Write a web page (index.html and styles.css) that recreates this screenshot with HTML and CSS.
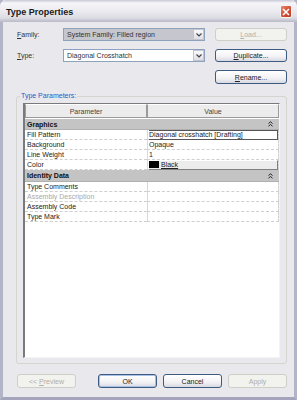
FILE: index.html
```html
<!DOCTYPE html>
<html>
<head>
<meta charset="utf-8">
<link rel="stylesheet" href="styles.css">
</head>
<body>
<div class="window">
  <div class="titlebar">
    <span class="title">Type Properties</span>
    <span class="close"><svg width="8" height="8" viewBox="0 0 8 8"><path d="M1 1 L7 7 M7 1 L1 7" stroke="#fff" stroke-width="1.6"/></svg></span>
  </div>
  <div class="body">
    <div class="props">
      <span class="lbl r1"><span><u>F</u>amily:</span></span>
      <div class="combo combo-dis r1"><span class="ctext">System Family: Filled region</span><span class="drop"><svg width="6" height="4" viewBox="0 0 6 4"><path d="M0.5 0.5 L3 3 L5.5 0.5" fill="none" stroke="#444" stroke-width="1.2"/></svg></span></div>
      <span class="btn btn-dis pbtn r1"><span><u>L</u>oad...</span></span>
      <span class="lbl r2"><span><u>T</u>ype:</span></span>
      <div class="combo r2"><span class="ctext">Diagonal Crosshatch</span><span class="drop"><svg width="6" height="4" viewBox="0 0 6 4"><path d="M0.5 0.5 L3 3 L5.5 0.5" fill="none" stroke="#444" stroke-width="1.2"/></svg></span></div>
      <span class="btn pbtn r2"><span><u>D</u>uplicate...</span></span>
      <span class="btn pbtn r3"><span><u>R</u>ename...</span></span>
    </div>
    <div class="group">
      <span class="legend">Type Parameters:</span>
      <div class="table">
        <div class="hcell">Parameter</div>
        <div class="hcell">Value</div>
        <div class="grow"><span>Graphics</span><svg class="chev" width="5" height="6" viewBox="0 0 5 6"><path d="M0.5 2.5 L2.5 0.8 L4.5 2.5 M0.5 5.2 L2.5 3.5 L4.5 5.2" fill="none" stroke="#222" stroke-width="1"/></svg></div>
        <div class="cell">Fill Pattern</div><div class="cell val"><span class="edit">Diagonal crosshatch [Drafting]</span></div>
        <div class="cell">Background</div><div class="cell val">Opaque</div>
        <div class="cell">Line Weight</div><div class="cell val">1</div>
        <div class="cell">Color</div><div class="cell val"><span class="colbtn"><span class="swatch"></span><u>Black</u></span></div>
        <div class="grow"><span>Identity Data</span><svg class="chev" width="5" height="6" viewBox="0 0 5 6"><path d="M0.5 2.5 L2.5 0.8 L4.5 2.5 M0.5 5.2 L2.5 3.5 L4.5 5.2" fill="none" stroke="#222" stroke-width="1"/></svg></div>
        <div class="cell">Type Comments</div><div class="cell val"></div>
        <div class="cell dim">Assembly Description</div><div class="cell val"></div>
        <div class="cell">Assembly Code</div><div class="cell val"></div>
        <div class="cell">Type Mark</div><div class="cell val"></div>
      </div>
    </div>
    <div class="footer">
      <span class="btn fbtn btn-dis"><span>&lt;&lt; <u>P</u>review</span></span>
      <span class="spacer"></span>
      <span class="btn fbtn btn-def">OK</span>
      <span class="btn fbtn">Cancel</span>
      <span class="btn fbtn btn-dis">Apply</span>
    </div>
  </div>
</div>
</body>
</html>
```

FILE: styles.css
```css
html, body {
  margin: 0;
  padding: 0;
  width: 297px;
  height: 400px;
  overflow: hidden;
  background: #ffffff;
}
.window {
  box-sizing: border-box;
  width: 297px;
  height: 400px;
  background: #e9e9ed;
  border-left: 3px solid #b4b4c8;
  border-right: 3px solid #b4b4c8;
  border-bottom: 3px solid #a4a4bc;
  font-family: "Liberation Sans", Arial, sans-serif;
  font-size: 7px;
  color: #222;
  display: flex;
  flex-direction: column;
}
.titlebar {
  height: 22px;
  margin: 0 -3px;
  box-sizing: border-box;
  background: linear-gradient(#c8c8d6 0px, #f6f6f9 3px, #ececf1 10px, #dcdce4 18px, #b8b8c8 22px);
  border-radius: 6px 6px 0 0;
  display: flex;
  align-items: center;
  justify-content: space-between;
  padding: 0 5px 0 6px;
}
.title {
  font-weight: bold;
  font-size: 9px;
  color: #1a1a1a;
  margin-top: 1px;
}
.close {
  width: 12px;
  height: 13px;
  box-sizing: border-box;
  border: 1px solid #f4f4f4;
  border-radius: 2px;
  background: linear-gradient(135deg, #e88a6a, #d4523a 50%, #c0381f);
  display: flex;
  align-items: center;
  justify-content: center;
  margin-top: 1px;
}
.body {
  flex: 1;
  display: flex;
  flex-direction: column;
  padding: 6px 0 0 0;
}
.props {
  display: grid;
  grid-template-columns: 46px 142px 10px 72px;
  grid-template-rows: 13px 13px 14px;
  row-gap: 8px;
  padding-left: 14px;
}
.r1 { grid-row: 1; }
.r2 { grid-row: 2; }
.r3 { grid-row: 3; }
.lbl {
  grid-column: 1;
  display: flex;
  align-items: center;
  color: #333;
}
.combo {
  grid-column: 2;
  box-sizing: border-box;
  border: 1px solid #8da2bd;
  background: #fff;
  display: flex;
  align-items: center;
  justify-content: space-between;
}
.pbtn {
  grid-column: 4;
}
.combo-dis {
  background: #c6c6ce;
}
.ctext {
  padding-left: 3px;
  color: #333;
}
.drop {
  width: 11px;
  height: 11px;
  box-sizing: border-box;
  background: linear-gradient(#fbfbfd, #dedee6);
  border: 1px solid #c4c4d0;
  display: flex;
  align-items: center;
  justify-content: center;
}
.btn {
  box-sizing: border-box;
  border: 1px solid #3d5a80;
  border-radius: 3px;
  background: linear-gradient(#ffffff, #f2f2f5 60%, #d8d8e2);
  display: flex;
  align-items: center;
  justify-content: center;
  color: #222;
}
.btn-dis {
  border-color: #cfcfc8;
  background: #f2f2ee;
  color: #b0b0a8;
}
.btn-def {
  box-shadow: inset 0 0 0 1px #a8c0e8;
}
.group {
  position: relative;
  margin: 12px 0 0 13px;
  width: 271px;
  height: 268px;
  box-sizing: border-box;
  border: 1px solid #d4d4d0;
  border-radius: 3px;
  padding: 6px 6px 5px 6px;
}
.legend {
  position: absolute;
  left: 3px;
  top: -5px;
  background: #e9e9ed;
  color: #2a5ac8;
  padding: 0 1px;
  line-height: 8px;
}
.table {
  box-sizing: border-box;
  height: 100%;
  background: #fff;
  border-left: 2px solid #7a7a7a;
  border-top: 1px solid #7a7a7a;
  border-right: 1px solid #f4f4f4;
  border-bottom: 1px solid #f4f4f4;
  display: grid;
  grid-template-columns: 122px 1fr;
  grid-template-rows: 15px 11px repeat(4, 10px) 12px repeat(4, 10px);
  align-content: start;
}
.hcell {
  height: 14px;
  box-sizing: border-box;
  background: #ececec;
  border: 1px solid #9a9a9a;
  border-top-color: #fff;
  display: flex;
  align-items: center;
  justify-content: center;
  color: #444;
}
.grow {
  grid-column: 1 / 3;
  background: #c4c4c4;
  font-weight: bold;
  color: #111;
  display: flex;
  align-items: center;
  justify-content: space-between;
  padding: 0 6px 0 2px;
  border-bottom: 1px solid #b0b0b0;
  box-sizing: border-box;
}
.chev {
  display: block;
}
.cell {
  box-sizing: border-box;
  border-bottom: 1px dashed #cfcfcf;
  padding-left: 2px;
  display: flex;
  align-items: center;
  color: #222;
  white-space: nowrap;
}
.val {
  border-left: 1px solid #d8d8d8;
  padding-left: 1px;
  border-right: 1px dashed #cfcfcf;
}
.dim {
  color: #a8a8a8;
}
.edit {
  box-sizing: border-box;
  width: 100%;
  height: 10px;
  border: 1px solid #555;
  border-left: none;
  display: flex;
  align-items: center;
  background: #fff;
}
.colbtn {
  box-sizing: border-box;
  width: 100%;
  height: 10px;
  background: #ececec;
  border: 1px solid #808080;
  border-top-color: #fff;
  border-left: none;
  display: flex;
  align-items: center;
  gap: 2px;
}
.swatch {
  width: 10px;
  height: 7px;
  background: #000;
}
.footer {
  display: flex;
  margin-top: 10px;
  padding-left: 14px;
  height: 14px;
}
.fbtn {
  width: 59px;
  margin-right: 6px;
}
.spacer {
  width: 16px;
}
```
